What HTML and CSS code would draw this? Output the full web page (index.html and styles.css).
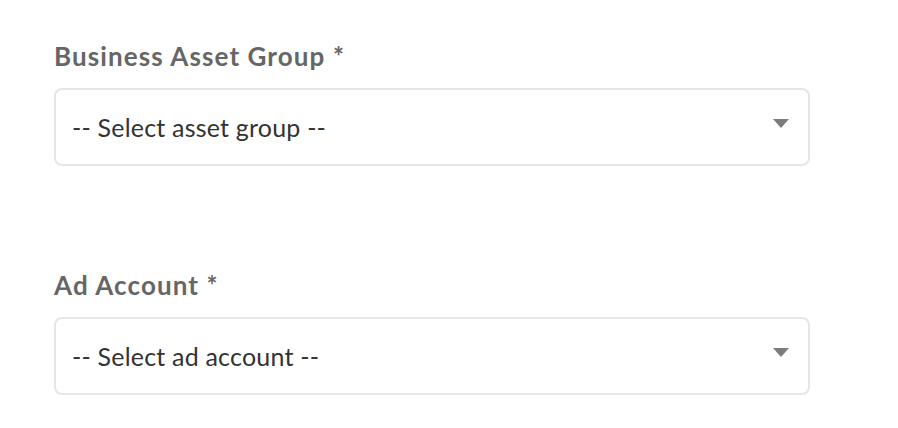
FILE: index.html
```html
<!DOCTYPE html>
<html lang="en">
  <head>
    <meta charset="UTF-8" />
    <meta name="viewport" content="width=device-width, initial-scale=1.0" />
    <title>Ad Account Setup</title>
    <link rel="stylesheet" href="styles.css">
  </head>
  <body>
    <form class="form">
      <div class="field">
        <label for="assetGroup">Business Asset Group *</label>
        <div class="select-wrap">
          <select id="assetGroup" name="assetGroup">
            <option value="">-- Select asset group --</option>
          </select>
        </div>
      </div>
      <div class="field">
        <label for="adAccount">Ad Account *</label>
        <div class="select-wrap">
          <select id="adAccount" name="adAccount">
            <option value="">-- Select ad account --</option>
          </select>
        </div>
      </div>
    </form>
  </body>
</html>
```

FILE: styles.css
```css
body {
  font-family: Lato, "Liberation Sans", sans-serif;
  background-color: #fff;
  margin: 0;
  padding: 0;
  color: #333;
}
.form {
  width: 756px;
  padding: 40px 0 0 54px;
}
.field {
  margin-bottom: 103px;
}
.field:last-child {
  margin-bottom: 0;
}
label {
  display: block;
  font-size: 26px;
  font-weight: bold;
  letter-spacing: 1.1px;
  color: #666;
  line-height: 32px;
  margin-bottom: 16px;
}
.select-wrap {
  position: relative;
}
.select-wrap::after {
  content: "";
  position: absolute;
  right: 21px;
  top: 31px;
  border-left: 8px solid transparent;
  border-right: 8px solid transparent;
  border-top: 9px solid #7c7c7c;
  pointer-events: none;
}
select {
  width: 100%;
  height: 78px;
  padding: 0 16px;
  font-family: inherit;
  font-size: 25px;
  letter-spacing: 0.2px;
  color: #333;
  background: #fff;
  border: 2px solid #e6e6e6;
  border-radius: 8px;
  appearance: none;
  -webkit-appearance: none;
  box-sizing: border-box;
  outline: none;
}
```
